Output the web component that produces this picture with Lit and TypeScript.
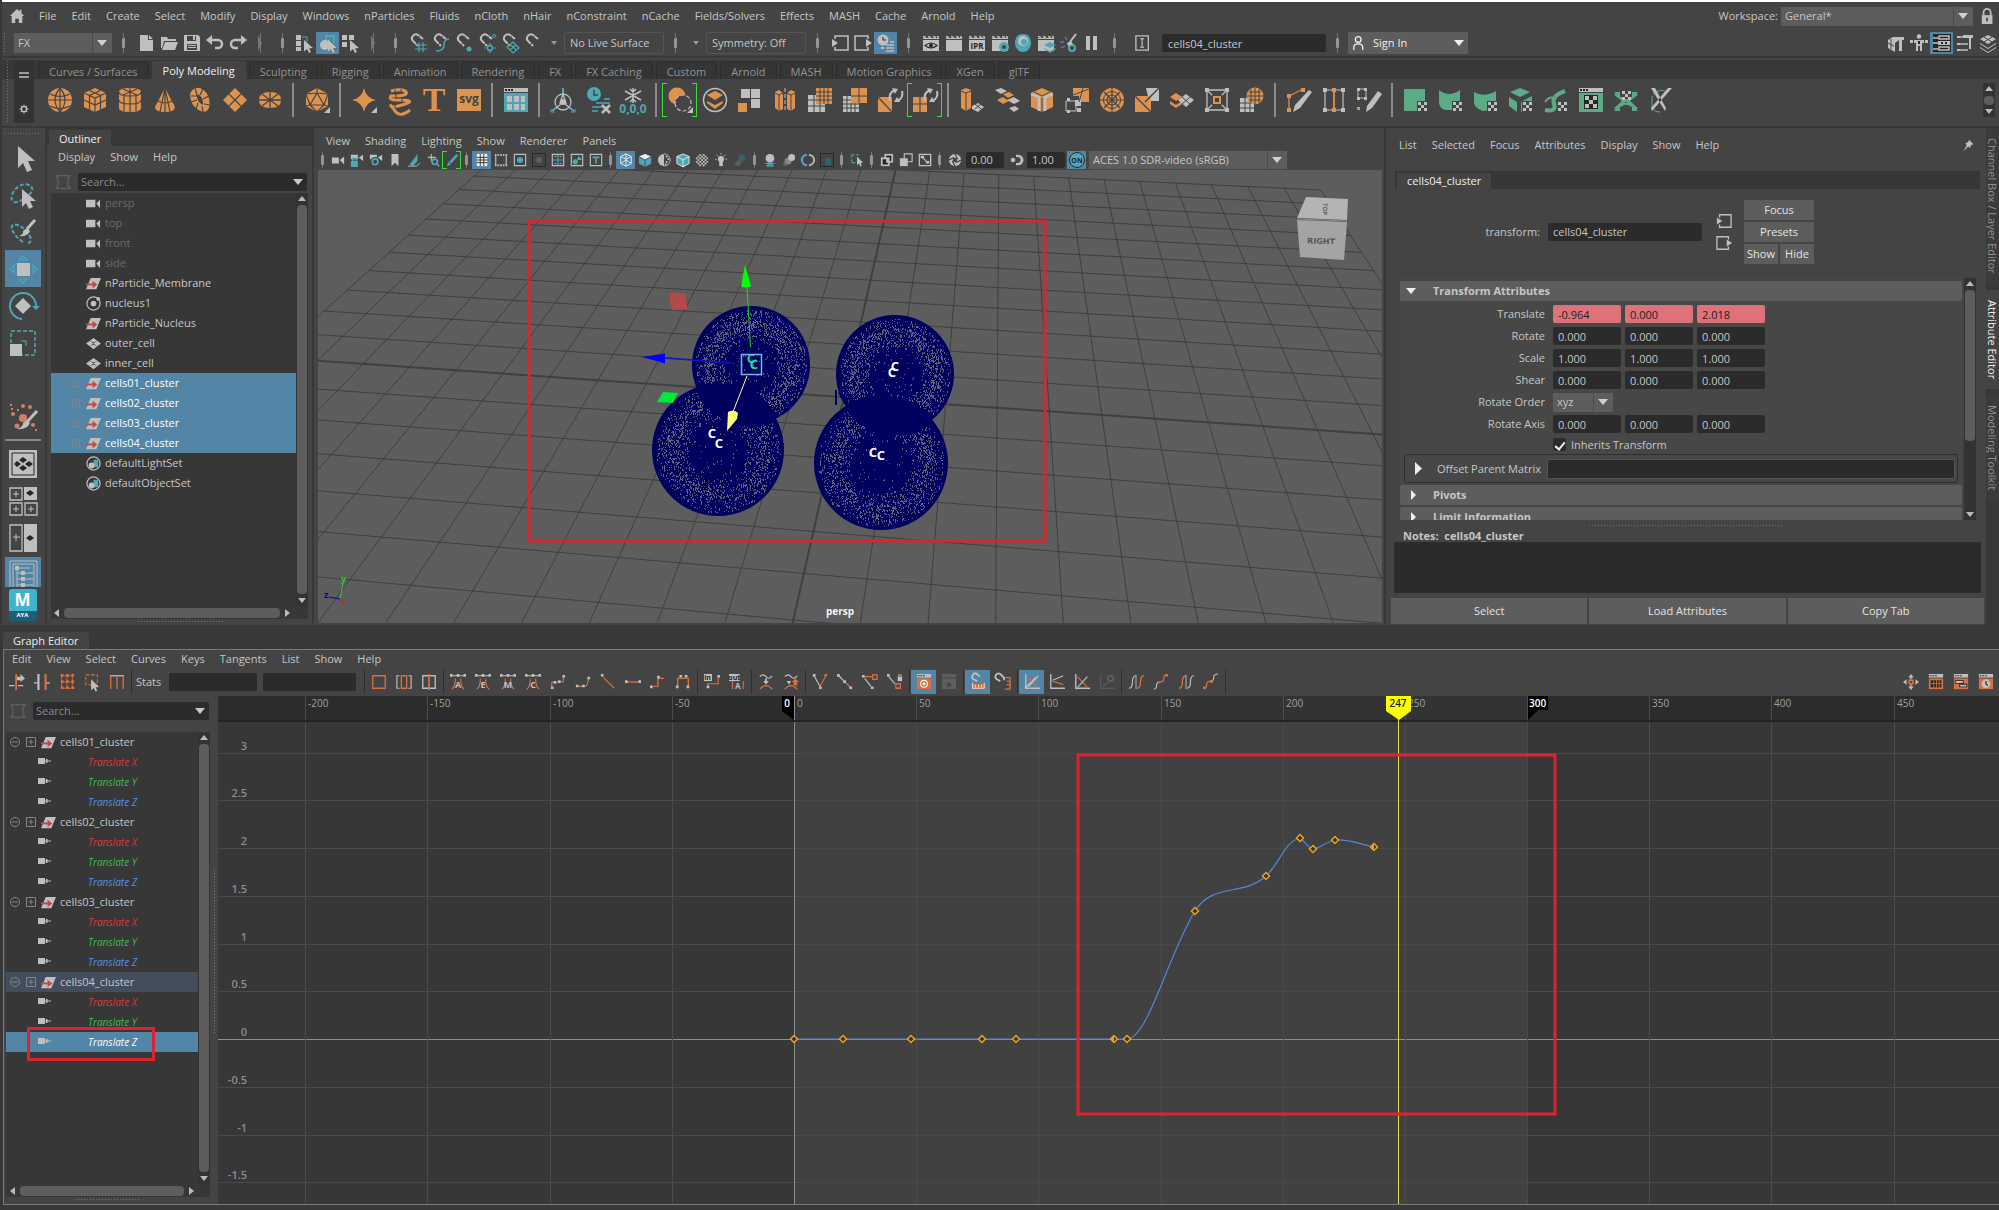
import { LitElement, html, svg, css } from "lit";
import { customElement } from "lit/decorators.js";
import { classMap } from "lit/directives/class-map.js";

/* ---------- Icon set ----------
   Each icon is a list of parts separated by "|".
   Part = colour letter (lower case fills, upper case strokes), optional stroke width, path data.
   A part that starts with "x" is a text: x colour size x y word family */
const COLORS: Record<string, string> = {
  g: "#bfbfbf", t: "#4fa6b5", o: "#dc9350", w: "#eeeeee", k: "#444444", n: "#5aab86", r: "#c04a48",
  a: "#d5703f", d: "#5e5e5e", b: "#262626", s: "#d07f6c", l: "#35e03a", m: "#35616b", e: "#858585",
};
const c = (x: number, y: number, r: number) => `M${x - r} ${y}a${r} ${r} 0 1 0 ${2 * r} 0a${r} ${r} 0 1 0 ${-2 * r} 0z`;
const clap = "g M1 6h16v11H1z|G1.5 M1 2.5l3 1M6 2.5l3 1M11 2.5l3 1M15 2.5l2 1|g M1 4h16v1H1z";
const magnet = "G2 M9 12L3.500 6.500A4 4 0 0 1 9 1l5 4|K1 M10.500 2l-2 3M6 11.500l2-3";
const checker = "k M13 13h11v11H13z|g M14 14h3v3h-3zM20 14h3v3h-3zM17 17h3v3h-3zM14 20h3v3h-3zM20 20h3v3h-3z";
const corner = "g M25 19v6h-6z";
const cursor = "g M8 6l9 8.500-4 .3 2 4-2 1-2-4-3 2.500z";
const win = "g M1 0h16v4H1z|b M2 1.500h2v1H2zM5 1.500h2v1H5zM8 1.500h2v1H8z|a M1 5h16v12H1z";
const bell = "A1.300 M2 17q4-2 4-12M16 17q-4-2-4-12|G1.200 M3 2h12|g M0 0h3v3H0zM7.500 0h3v3h-3zM15 0h3v3h-3z";
const sq = (x: number, y: number) => `M${x} ${y}h3v3h-3z`;
const sphereLines = "K1.200 M12 0v24M0 12h24M2 6q10 5 20 0M2 18q10 5 20 0M12 0q-10 12 0 24M12 0q10 12 0 24";

const ICONS: Record<string, string> = {
  home: "g M9 1L1 9h2v8h4v-5h4v5h4V9h2l-3-3V2h-2v2z",
  lock: "G2 M4 8V5a4 4 0 0 1 8 0v3|g M2 8h12v10H2z|k M7 11h2v4H7z",
  new: "g M3 1h8v5h5v11H3z|g M12 1l4 4h-4z",
  open: "g M1 3h6l1 2h8v2H4L2 14H1z|g M5 8h13l-3 8H2z",
  save: "g M1 1h14l2 2v14H1z|k M4 2h9v5H4zM4 10h10v6H4z|g M5 11h8v1H5zM5 13h8v1H5zM10 2h2v4h-2z",
  undo: "G2.500 M4 6h8a4 4 0 0 1 0 8H9|g M6 1v10L0 6z",
  redo: "G2.500 M14 6H6a4 4 0 0 0 0 8h3|g M12 1v10l6-5z",
  selH: "g M0 1h5v5H0zM0 7h5v5H0zM0 13h5v4H0z|T1 M6 3h5v5|g M8 6l9 8-4 .5 2 3.500-2 1-2-4-3 2.500z",
  selO: "T2 M7 8V2h8v7|g " + c(6, 11, 5) + "|K1 M9 5l9 9-4 .5 2 3.500|g M9 5l9 9-4 .5 2 3.500-2 1-2-4-3 2.500z",
  selC: "g M0 1h5v5H0zM7 1h5v5H7zM0 8h5v5H0z|g M8 6l9 8-4 .5 2 3.500-2 1-2-4-3 2.500z",
  snapGrid: magnet + "|T1.200 M6 11h12M6 15h12M10 8v10M14 8v10",
  snapCurve: magnet + "|T1.500 M4 17q8 0 8-6t5-6",
  snapPoint: magnet + "|t " + c(14, 15, 2.5),
  snapCenter: magnet + "|T1.500 " + c(12, 14, 2.5) + "|T1 " + c(16, 2, 1.5) + "|T1.200 M12 9v2M12 17v2M6 14h2M16 14h2",
  snapPlane: magnet + "|T1.200 M6 13l6-5 6 6-6 5zM9 10l6 6M9 16l6-5",
  snap: magnet,
  input: "G1.500 M4 5V2h13v14H4v-3|g M1 5l6 4-6 4z",
  output: "G1.500 M14 5V2H1v14h13v-3|g M12 5l6 4-6 4z",
  history: "g " + c(6, 6, 5.5) + "|B1 M6 3v3h3|G1.500 M9 11h8M9 14h8M9 17h8M13 8h4|g M4 13h3v2H4z",
  rView: clap + "|B1.200 M3 11.500q6-5 12 0-6 5-12 0z|b " + c(9, 11.5, 2),
  rFrame: clap,
  rIpr: clap + "|x b 8 9 15 IPR",
  rSet: clap + "|t " + c(13, 13, 5) + "|k " + c(13, 13, 2),
  rRing: "t M9 0C15 0 17 5 17 9s-3 9-8 9-8-5-8-9 2-9 8-9z|g " + c(9, 7, 5) + "|t " + c(10, 8, 3),
  rLayer: clap + "|t M13 8l6 3-6 3-6-3zM7 14l6 3 6-3v1l-6 4-6-4z",
  rLight: "T2 " + c(12, 14, 3) + "|G2 M16 0l-6 8|g M7 9l4-2 2 3-5 2z|T1 M0 8h4M1 14l4-2M5 3l2 3",
  pause: "g M3 2h4v14H3zM10 2h4v14h-4z",
  rename: "G1.500 M1 1h14v16H1z|G1.300 M6 4h1l1 1 1-1h1M8 5v8M6 14h1l1-1 1 1h1",
  user: "W1.500 " + c(7, 5, 3.2) + "|W1.500 M2 17v-3q0-4 5-4t5 4v3",
  tModel: "g M1 6l5-3h11v3h-2v11h-3V6l-4 3v9l-7-4z|K1 M1 9l6 3M4 5v10",
  tRig: "g " + c(9, 2.5, 2.3) + "|g M4 6h10v3h-2v8h-2v-5H8v5H6V9H4z|b M8 7h2v3H8z|g M0 6h3v3H0zM15 6h3v3h-3z",
  tAttr: "b M0 0h18v18H0z|G1.500 M6 2h10v3H6zM6 13h10v3H6z|G1.500 M0 4h5M0 9h5M0 15h5|g M5 7h12v4H5z|b M8 8h2v2H8zM12 8h2v2h-2z",
  tTool: "g M7 1h10v3h-2v11h-2V4H7zM1 2h3v2H1zM1 9h3v2H1zM1 15h3v2H1z|G1.300 M4 3h4M4 10h8M4 16h8",
  tLayer: "g M9 1l8 4-8 5-8-5zM1 9l8 5 8-5v1l-8 5-8-5zM1 13l8 5 8-5v1l-8 5-8-5z|K1 M5 3l8 5M13 3L5 8",
  lines: "G1.500 M1 4h10M1 8h10",
  gear: "G2 " + c(8, 8, 4) + "|G2 M8 1v3M8 12v3M1 8h3M12 8h3M3 3l2 2M11 11l2 2M13 3l-2 2M3 13l2-2",

  sphere: "o " + c(12, 12, 12) + "|" + sphereLines,
  cube: "o M12 0l11 5v14l-11 5-11-5V5z|K1.200 M1 5l11 5 11-5M12 10v14M6.500 2.500l11 5v14M17.500 2.500l-11 5v14M1 12l11 5 11-5",
  cylinder: "o M1 4q0-4 11-4t11 4v16q0 4-11 4T1 20z|K1.200 M1 4q0 4 11 4t11-4M1 12q0 4 11 4t11-4M12 0v24M6 7v16M18 7v16M5 1l14 6M19 1L5 7",
  cone: "o M12 0l10 19q0 5-10 5T2 19z|K1.200 M12 0v24M12 0L7 24M12 0l5 24M5 13q7 4 14 0",
  torus: "O6.500 M7 4C12 1 17 7 18 12S18 21 15 20.500 7 16 6 11 5 6 7 4z|K1.200 M3 8h6M7 0l2 7M15 1l-3 6M21 8l-6 3M22 17l-6-1M15 24l-1-6M8 21l2-6M3 14l6-2",
  plane: "o M12 0l12 12-12 12L0 12z|K1.300 M6 6l12 12M18 6L6 18",
  disc: "o M1 12q0-8 11-8t11 8-11 8T1 12z|K1.300 M1 12h22M12 4v16M4 6l16 12M20 6L4 18",
  platonic: "o M12 0l11 6v12l-11 6L1 18V6z|K1.200 M12 5l7 12H5zM12 0v5M1 6l11-1 11 1M1 18l4-1M23 18l-4-1M5 17l7 7 7-7M5 17L1 6M19 17l4-11|" + corner,
  star: "o M12 0q2 10 12 12-10 2-12 12-2-10-12-12 10-2 12-12z|" + corner,
  helix: "O3 M4 3q12-3 15 1T4 8q-3 4 6 4t12 1-7 4-11 1 4 5 15-1|K1 M8 1v5M14 1v5M9 6v5M15 9v6M8 14v6M14 19v6",
  type: "x o 34 12 23 T serif",
  svgIcon: "o M0 1h24v22H0z|x k 12 12 15 svg",
  grid: "g M0 0h24v4H0z|b M1 1h2v2H1zM4 1h2v2H4zM7 1h2v2H7z|t M0 5h24v19H0z|g M3 8h5v6H3zM10 8h5v6h-5zM17 8h4v6h-4zM3 16h5v6H3zM10 16h5v6h-5zM17 16h4v6h-4z",
  joint: "G1.300 " + c(12, 14, 8) + "|g " + c(12, 14, 3) + "|T2 M12 0v6M6 19l-5 4M18 19l5 4|G1.300 M12 6l-3 9h6zM10 16l-5 4M14 16l5 4|T1 M4 24H0v-3M20 24h4v-3",
  clockX: "t " + c(8, 6, 7) + "|K1.500 M8 2v5h4|T1.500 M10 15h14M6 19h10M6 23h6M18 11h6|G2.500 M16 17l8 8M24 17l-8 8",
  freeze: "G1.500 M12 0v15M4 3l16 9M20 3L4 12M9 1l3 3 3-3M9 14l3-3 3 3|x t 12 12 25 0,0,0",
  boolA: "o " + c(9, 8, 8.5) + "|k " + c(15, 15, 8) + "|G1.200d " + c(15, 15, 8) + "|o M7 8l6-4 4 3z|" + corner,
  layers: "G1.500 " + c(12, 12, 11.5) + "|o M12 3l8 4-8 5-8-5zM4 13l8 4 8-4v2l-8 6-8-6z",
  extract: "g M3 1h9v9H3zM13 1h9v9h-9zM13 11h9v9h-9z|o M0 15h9v9H0z",
  mirror: "o M2 4l4-2 4 3v16l-4 2-4-3zM22 4l-4-2-4 3v16l4 2 4-3z|K1 M2 5l4 2 4-2M6 7v16M22 5l-4 2-4-2M18 7v16|G1 M12 0v4M12 6v4M12 12v4M12 18v4",
  quadGrid: "g M0 7h17v17H0z|o M8 0h16v16H8z|K1 M12 0v24M16 0v16M20 0v16M8 4h16M8 8h16M0 12h24M0 18h17M6 7v17",
  quadGrid2: "g M0 8h16v16H0z|o M8 0h16v15H8z|K1 M16 0v15M8 8h16M4 8v16M8 15v9M12 15v9M0 12h8M0 16h16M0 20h16",
  retri: "o M0 9h14v15H0z|K1.200 M0 9l14 15|G2 M17 2q-7 3-5 11M19 13q7-3 5-10|g M14 0l6 1-3 5zM22 14l-6 0 3-5z",
  requad: "o M0 9h14v15H0z|K1.200 M0 16h14M7 9v15|G2 M17 2q-7 3-5 11M19 13q7-3 5-10|g M14 0l6 1-3 5zM22 14l-6 0 3-5z",
  extrude: "o M1 2l5-2 5 2v18l-5 3-5-3z|K1 M1 3l5 2 5-2M6 5v18|g M12 18l6-3 6 4-6 5-6-3z|K1 M15 16l6 5M21 16l-6 5",
  bridge: "g M0 2l6-2 6 3-6 3zM12 12l7-3 6 4-6 3zM14 20l6-2 4 3-5 3z|o M8 6l6-2 5 3-6 3zM2 12l6-3 6 4-6 3z",
  bevel: "o M12 0l11 5v14l-11 5-11-5V5z|G2.500 M1 6l8 3v14M23 6l-8 3v14|K1 M12 10v14M4 4l8 4 8-4",
  addDiv: "o M8 0h16v14H14V8H8z|G1 M1 13h10v10H1z|g M2 10h3v3H2zM10 12h6v6h-6zM2 22h3v3H2zM12 20h4v4h-4z|K1 M8 7l16-6M14 14l4-14",
  circular: "o " + c(12, 12, 12) + "|K1.200 " + c(12, 12, 5) + "|K1.200 M12 0v24M0 12h24M4 4l16 16M20 4L4 20|K1 " + c(12, 12, 8.5),
  collapse: "g M11 0h13v13H14z|o M0 8h16v16H0z|K1.300 M0 8l16 16|K1.500 M10 14L24 0",
  merge: "o M0 9l6-4 6 4-6 4zM0 13l6 4 6-4v3l-6 4-6-4z|g M8 12l8-6 8 6-8 7z|K1 M12 9l8 7M20 9l-8 7",
  smooth: "G1.300 M2 2h20v20H2zM2 2l20 20M22 2L2 22|g M0 0h4v4H0zM20 0h4v4h-4zM0 20h4v4H0zM20 20h4v4h-4z|k M7 7h10v10H7z|O2 M9 9h6v6H9z",
  sculpt: "g M0 10h14v14H0z|K1 M0 15h14M0 20h14M5 10v14M10 10v14|o " + c(15, 8, 8.5) + "|K1 M15 0v17M7 8h17M9 4h12M9 12h12M11 1v14M19 1v14",
  knife: "O1.200 M2 22V8L16 1|o M0 20h4v4H0zM0 6h4v4H0zM14 0h4v4h-4z|g M22 2l3 2-12 16-7 4 2-7z",
  edgeLoop: "G1.200 M3 2v20M21 2v20M3 2h18M3 22h18|O1.800 M12 2v20|g M1 0h4v4H1zM19 0h4v4h-4zM1 20h4v4H1zM19 20h4v4h-4z|o M10 0h4v4h-4zM10 20h4v4h-4z",
  pencil: "g M0 0h3v3H0zM7 0h3v3H7zM0 9h3v3H0zM7 9h3v3H7z|G1 M1 1h8v9H1z|o M0 19h3v3H0z|g M21 3l4 3-10 14-6 4 1-6z",
  uvPlane: "n M0 1h21v22H0z|" + checker,
  uvA: "n M0 2q10 8 21 0v20H6q-6-2-6-8z|" + checker,
  uvB: "n M0 4q10 6 22-1v13q-4 7-13 7-9-3-9-9z|" + checker,
  uvC: "n M1 4l10-4 10 4-10 5zM0 9l8 5v10l-8-6zM12 14l11-6v12l-11 4z|" + checker,
  uvD: "N4 M1 22q12 2 9-6t11-13|N2 M1 14q5-7 11-3|" + checker,
  uvE: "g M0 0h24v4H0z|b M1 1h2v2H1zM4 1h2v2H4zM7 1h2v2H7z|n M0 5h24v19H0z|b M5 7h14v14H5z|g M6 8h4v4H6zM14 8h4v4h-4zM10 12h4v4h-4zM6 16h4v4H6zM14 16h4v4h-4z",
  uvF: "N2.500 M1 6l9 7-9 8M23 6l-9 7 9 8M6 10q6 5 12 0M6 18q6-5 12 0|n M0 4h6v5zM24 4h-6v5zM0 23h6v-5zM24 23h-6v-5z|g M8 3h3v3H8zM14 3h3v3h-3zM11 6h3v3h-3zM8 9h3v3H8zM14 9h3v3h-3z",
  uvG: "N1 M4 6q8-6 14-2M3 8v12q4 5 8 4|g M2 0l4 0 11 20-1 3zM23 0h-4L2 20l1 3z",

  camera: "g M1 5h8v7H1zM10 8l5-4v9z",
  camLock: "g M1 2h8v5H1zM10 5l5-3v7z|t M1 9h8v7H1z|T1.500 M3 9V6h4v3",
  camGear: "g M1 2h8v5H1zM10 5l5-3v7z|k " + c(7, 10, 5.5) + "|T2 " + c(7, 10, 3.2),
  bookmark: "g M4 1h8v14l-4-4-4 4z",
  imgPlane: "t M3 13L12 1v8l-5 6z|G1 M1 15h10l4-4",
  panZoom: "G1.300 M6 1v8M2 5h9|T2 " + c(10, 10, 3) + "|T2 M12 12l3 3",
  brushT: "T3 M14 2L6 11|t M4 10l3 3-5 2z",
  gridB: "w M2 1h12v14H2z|B1 M2 5h12M2 8h12M2 11h12M6 1v14M10 1v14",
  film: "G1.300 M2 2h12v12H2z|g M1 1h14v2H1zM1 13h14v2H1z|b M3 1h1v2H3zM6 1h1v2H6zM9 1h1v2H9zM12 1h1v2h-1zM3 13h1v2H3zM6 13h1v2H6zM9 13h1v2H9zM12 13h1v2h-1z",
  gate: "G1.300 M1.500 1.500h13v13h-13z|t " + c(8, 8, 3.5),
  gateMask: "b M0 0h16v16H0z|k M1 1h14v14H1z|d " + c(8, 8, 3.5),
  field: "G1.300 M1.500 1.500h13v13h-13z|T1.300 M8 2v12M2 8h12|G1 M4 4h2M10 4h2M4 12h2M10 12h2",
  safeA: "G1.300 M1.500 1.500h13v13h-13z|t " + c(6, 10, 3) + "|t M10 3l4 5H8z",
  safeT: "G1.300 M1.500 1.500h13v13h-13z|t M4 4h8v2H9v6H7V6H4z",
  wire: "W1.100 M8 1l6 3v8l-6 3-6-3V4zM2 4l6 3 6-3M8 7v8M8 1v6M2 12l6-4 6 4",
  shade: "t M8 1l7 3v8l-7 4-7-4V4z|w M1 4l7-3 7 3-7 4z|K1 M1 4l7 4 7-4M8 8v8",
  half: "g M8 1a7 7 0 0 0 0 14z|G1 M8 1a7 7 0 0 1 0 14|g M10 3h2v2h-2zM12 6h2v2h-2zM10 9h2v2h-2zM9 12h2v2H9z",
  texCube: "t M8 1l7 3v8l-7 4-7-4V4z|W1 M8 1l7 3v8l-7 4-7-4V4zM1 4l7 4 7-4M8 8v8",
  check: "g M5 1h2v2H5zM9 1h2v2H9zM3 3h2v2H3zM7 3h2v2H7zM11 3h2v2h-2zM1 5h2v2H1zM5 5h2v2H5zM9 5h2v2H9zM13 5h2v2h-2zM3 7h2v2H3zM7 7h2v2H7zM11 7h2v2h-2zM1 9h2v2H1zM5 9h2v2H5zM9 9h2v2H9zM13 9h2v2h-2zM3 11h2v2H3zM7 11h2v2H7zM11 11h2v2h-2zM5 13h2v2H5zM9 13h2v2H9z",
  bulb: "g " + c(8, 7, 3.5) + "|g M6 10h4v5H6z|G1 M8 0v2M1 7h2M13 7h2M3 2l2 2M13 2l-2 2",
  shadow: "m " + c(10, 6, 4) + "|d M1 13l6-6 3 5-4 3z",
  ao: "g " + c(8, 6, 5) + "|T1.300 M2 12h12M4 15h8M4 9l8 6M12 9l-8 6",
  blur: "d " + c(4, 12, 3) + "|e " + c(7, 9, 4) + "|g " + c(11, 5, 4),
  multi: "T2.500 M7 2a6 6 0 0 0 0 12|G2 M9 2a6 6 0 0 1 0 12",
  depth: "b M0 0h16v16H0z|k M1 1h14v14H1z|m M6 6h7v8H6z",
  isolate: "T1.300 M2 2h3M7 2h3M2 2v3M2 7v3M2 11h4|g M8 4l7 7-3 .5 1.500 3-1.500 1-2-3.500-2 2z",
  xrayA: "g M5 1h10v10H5z|b M7 3h6v6H7z|g M1 5h10v10H1z|b M3 7h4v6H3zM7 11h2v2H7z",
  xrayB: "G1.300 M6 1h9v9H6z|g M1 6h9v9H1z",
  xrayC: "G1.500 M1.500 1.500h13v13h-13z|G1.500 M5 5l6 6|g M3 3h4v3H3zM9 9h4v3H9z",
  aperture: "g " + c(8, 8, 7) + "|k " + c(8, 8, 2.5) + "|K1.300 M8 1l3 6M15 8l-6 3M8 15l-3-6M1 8l6-3",
  gamma: "g M8 1h3a7 7 0 0 1 0 14H8v-3h2a4 4 0 0 0 0-8H8z|g " + c(4, 8, 3),
  on: "t " + c(8, 8, 8) + "|B1 " + c(8, 8, 7.5) + "|x b 7 8 11 ON",

  arrow: "g M9 2v22l5-5 4 9 5-2-4-9h7z",
  lasso: "T2d M14 18C6 24 1 21 3 14S14 1 20 4s3 7-1 11|g M13 8v18l4-4 3 6 4-2-3-6h6z",
  paint: "T2d M14 24C8 20 1 12 3 8s10 0 15 6 5 10 1 11|G3 M26 2L18 11|g M18 10l3 3q-2 6-11 5 5-2 4-5z",
  move: "g M8 8h13v13H8z|T1.200 M10 5h8l-4-4zM10 24h8l-4 4zM5 10v8l-4-4zM24 10v8l4-4z",
  rotate: "T2 M13 27A13 13 0 1 1 27 14|t M23 14h8l-4 4z|g M14 6l8 8-8 8-8-8z",
  scale: "T1.500d M2 2h24v24H2z|T1.200 M12 12h5v5|g M1 15h12v12H1z",
  spray: "s " + c(14, 15, 4) + "|s " + c(14, 3, 2) + "|s " + c(21, 4, 2) + "|s " + c(4, 11, 2) + "|s " + c(8, 23, 2.5) + "|s " + c(24, 22, 2) + "|s M1 1h2v2H1zM8 6h2v2H8zM2 5h2v2H2zM26 26h2v2h-2z|G3 M28 8L18 19|g M18 17l3 3q-3 7-13 6 6-2 6-6z",
  pane1: "g M0 0h28v28H0z|B1 M3 3h22v22H3z|b M14 7l4 3-4 3-4-3zM14 15l4 3-4 3-4-3zM8 11l4 3-4 3-3-3zM20 11l4 3-4 3-4-3z",
  pane4: "G1.300 M1 1h12v12H1zM1 16h12v12H1zM16 16h12v12H16z|g M15 0h13v13H15z|G1 M7 4v6M4 7h6M7 19v6M4 22h6M22 19v6M19 22h6|b M21 3l4 3-4 3-4-3z",
  pane2: "G1.300 M1 1h12v26H1z|g M15 0h13v28H15z|G1 M7 10v7M4 13h7|b M21 11l4 3-4 3-4-3z",
  paneTree: "G1 M1 30V1h27v29M4 30V4h21v26|g M6 6h4v4H6zM12 11h4v4h-4zM12 17h4v4h-4zM12 23h4v4h-4z|G1 M10 8h11M8 10v17M16 13h8M8 13h4M16 19h8M8 19h4M16 25h8M8 25h4",
  swap: "D1.300 M3 12V4M13 4v8M5 1.500h6M5 14.500h6|d M0 1h5l-3 4zM11 1h5l-2 4zM0 15h5l-3-4zM11 15h5l-2-4z",

  cam: "g M0 4h10v8H0zM11 8l4-4v9z",
  xform: "g M5 2h11l-5 12H0z|R2 M0 9h8|r M7 5l5 4-5 4z",
  nuc: "G1.300 " + c(8, 8, 7) + "|g " + c(8, 8, 3) + "|g " + c(13, 3, 2),
  mesh: "g M8 2l4 3-4 2-4-2zM8 9l4 2-4 3-4-3zM4 5l4 3-4 3-4-3zM12 5l4 3-4 3-4-3z",
  objset: "G1.300 " + c(8, 8, 7) + "|t M8 4h5v8H8z|g " + c(6, 10, 3.2),
  plus: "E1 M1.500 1.500h9v9h-9zM3.500 6h5M6 3.500v5",
  minus: "E1 " + c(6, 6, 4.5) + "|E1 M3 6h6",
  plug: "g M1 3h7v6H1zM8 5.500h6v1H8zM9 4h1.500v4H9z",
  pin: "g M8 1l6 6-3 1-2 4-2-2-6 6 4-8-2-2 4-2z",

  g1: "A2 M8 0v18|G1.500 M0 13h6M10 13h6|g M9 3h4V0l5 5-5 4V7H9z",
  g2: "G2.500 M5 0v18|A2.500 M13 0v18|G1.500 M0 10h4M14 10h4",
  g3: "A1 M3 2h12v14H3zM9 2v14M3 9h12|a M2 0h3v3H2zM8 0h3v3H8zM14 0h3v3h-3zM2 7h3v3H2zM8 7h3v3H8zM14 7h3v3h-3zM2 14h3v3H2zM8 14h3v3H8zM14 14h3v3h-3z",
  g4: "A1.200d M2 1h13v11H2z|" + cursor,
  g5: "G1.500 M1 2h16|A1.500 M2 2v15M9 2v15M16 2v15",
  g6: "A1.500 M2 2h14v14H2z",
  g7: "A1.500 M6 2h6v14H6z|G1.300 M4 2H1v14h3M14 2h3v14h-3",
  g8: "G1.500 M2 2h14v14H2z|A2 M9 0v18",
  tA: bell + "|x g 10 9 16 A", tE: bell + "|x g 10 9 16 E", tM: bell + "|x g 10 9 16 M", tC: bell + "|x g 10 9 16 C",
  c1: "A1.300 M2 14V9h13V4|g " + sq(1, 14) + sq(4, 8) + sq(9, 7) + sq(14, 1),
  c2: "A1.300 M3 14h8q4-1 4-10|g " + sq(1, 12) + sq(8, 12) + sq(14, 3),
  c3: "A1.300 M4 4l12 12|g " + sq(1, 0),
  c4: "A1.500 M3 9h12|g " + sq(0, 7) + sq(15, 7),
  c5: "A1.500 M3 14h6V5h7|g " + sq(0, 13) + sq(8, 2),
  c6: "A1.500 M3 14V5h12v9|g " + sq(1, 13) + sq(13, 13) + sq(5, 1) + sq(11, 1),
  tIn: "g M0 0h9v8H0z|x b 8 4 7 in|A1.300 M4 16v-5h12V4|g " + sq(3, 13) + sq(15, 1),
  tOut: "g M0 0h12v8H0z|x b 8 6 7 out|A1.300 M4 17V8M16 17V8|x g 9 10 17 A",
  b1: "G1.300 M2 3q4-4 7 0t7-1|G2 M9 5v4|g M6 8h6l-3 4z|A1.500 M2 17q7-8 14 0",
  b2: "G1.300 M2 3q4-4 7 0t7-1|g M4 8h5l-2 4z|a M10 9l4-4 4 4h-2v4h-4V9z|A1.500 M2 17q7-8 14 0",
  k1: "G1.300 M3 3l6 11|A1.300 M9 14l6-11|g " + sq(1, 0) + sq(8, 14) + "|a " + sq(14, 0),
  k2: "G1.300 M2 2l5 5|A1.300 M7 7l9 9|g " + sq(0, 0) + sq(7, 7) + sq(14, 14),
  k3: "A1.500 M3 3h9M12 1h5v5h-5z|G1.300 M3 5l7 9|g " + sq(0, 1) + sq(10, 14),
  k4: "G1.300 M2 3l7 8|A1.500 M10 11h5v5h-5z|g " + sq(0, 0) + "|g M12 3h5v5h-5z|G1 M13 3V1h3v2",
  w1: win + "|w " + c(9, 11, 4.5) + "|A1.500 " + c(9, 11, 2.5),
  w2: "d M1 0h16v4H1zM1 5h16v12H1z|k " + c(9, 12, 2.5),
  m1: "G2 M8 8L4 6A3.500 3.500 0 0 1 8 0l3 3|a M2 11h15v6H2z|W1 M3 10v6h13v-6M6 12v3M9.500 12v3M13 12v3",
  m2: "G2 M6 8L2 6A3 3 0 0 1 6 0l4 4v3|A1.500 M11 4h6v13h-6M13 8h4M13 12h4",
  v1: "G1.500 M2 0v16h16M1 16l12-12|A1.500 M4 4l10 9|G1.500 M5 14L16 2",
  v2: "G1.500 M2 0v16h16|G1.300 M4 7l12-5|A1.300 M4 8l12 4",
  v3: "G1.500 M2 0v16h16|A1.300 M4 3l11 12|G1.300 M4 15L15 3",
  v4: "D1.300 M2 0v16h16M4 14l8-6|D2 " + c(13, 5, 3),
  f1: "G1.300 M1 16q4 0 4-7t4-7|G1 M9 1v16|A1.500 M10 16q4 0 4-7t4-7",
  f2: "G1.300 M1 17q3 0 3-4t4-4|A1.500 M8 9q4 0 4-4t4-4|a " + sq(14, 0),
  f3: "A1.500 M1 16q4 0 4-7t4-7|G1 M9 1v16|G1.300 M10 16q4 0 4-7t4-7",
  f4: "A1.500 M1 16q3 0 3-4t5-4|G1.300 M9 8q3 0 3-4t5-4|a " + sq(0, 14) + sq(8, 7),
  r1: "g M9 0l3 4H6zM9 18l3-4H6zM0 9l4-3v6zM18 9l-4-3v6z|a M6 6h6v6H6z|k M8 8h2v2H8z|G1.500 M9 3v3M9 12v3",
  r2: win + "|b M3 7h12v8H3z|a M6 7h1v8H6zM9 7h1v8H9zM12 7h1v8h-1zM3 10h12v1H3z",
  r3: win + "|b M2 7h10v4H2zM7 11h9v4H7z|g M3 8h8v2H3zM8 12h7v2H8z",
  r4: win + "|g " + c(9, 11, 5) + "|B1.300 M9 8v3l2 2",
};

function icon(name: string, size: number, box = size) {
  const parts = (ICONS[name] ?? "").split("|").map((part) => {
    if (part.startsWith("x ")) {
      const [, col, fs, x, y, word, fam] = part.split(" ");
      return svg`<text x=${x} y=${y} fill=${COLORS[col]} font-size=${fs} font-weight="700" text-anchor="middle"
        font-family=${fam ? "Liberation Serif, serif" : "Open Sans, sans-serif"}>${word}</text>`;
    }
    const at = part.indexOf(" ");
    const head = part.slice(0, at);
    const d = part.slice(at + 1);
    const key = head[0];
    if (key === key.toLowerCase()) return svg`<path d=${d} fill=${COLORS[key]}/>`;
    return svg`<path d=${d} fill="none" stroke=${COLORS[key.toLowerCase()]} stroke-width=${parseFloat(head.slice(1)) || 1}
      stroke-dasharray=${head.endsWith("d") ? "4 2" : "none"}/>`;
  });
  return html`<svg class="ico" width=${size} height=${size} viewBox="0 0 ${box} ${box}" aria-hidden="true">${parts}</svg>`;
}

const RED = "#da2430";

/* ---------- Perspective viewport ---------- */
type Pt = [number, number];

/** Solves the plane-to-screen projection from four known grid corners. */
function projection(src: Pt[], dst: Pt[]) {
  const m: number[][] = [];
  src.forEach(([u, v], i) => {
    const [x, y] = dst[i];
    m.push([u, v, 1, 0, 0, 0, -u * x, -v * x, x]);
    m.push([0, 0, 0, u, v, 1, -u * y, -v * y, y]);
  });
  for (let i = 0; i < 8; i++) {
    let p = i;
    for (let r = i; r < 8; r++) if (Math.abs(m[r][i]) > Math.abs(m[p][i])) p = r;
    [m[i], m[p]] = [m[p], m[i]];
    for (let r = 0; r < 8; r++) {
      if (r === i) continue;
      const f = m[r][i] / m[i][i];
      for (let k = i; k < 9; k++) m[r][k] -= f * m[i][k];
    }
  }
  const h = m.map((row, i) => row[8] / row[i]);
  return (u: number, v: number): Pt => {
    const w = h[6] * u + h[7] * v + 1;
    return [(h[0] * u + h[1] * v + h[2]) / w, (h[3] * u + h[4] * v + h[5]) / w];
  };
}
const project = projection(
  [[-12, -10], [12, -12], [8, 5], [-12, -2]],
  [[156, 6], [1003, 20], [1014, 449], [6, 141]],
);

const BALLS = [
  { x: 433, y: 195, r: 59 },
  { x: 577, y: 204, r: 59 },
  { x: 400, y: 280, r: 66 },
  { x: 563, y: 293, r: 67 },
];

function speckles() {
  let seed = 7;
  const rnd = () => ((seed = (seed * 16807) % 2147483647) / 2147483647);
  let d = "";
  for (const b of BALLS) {
    for (let i = 0; i < 3600; i++) {
      const a = rnd() * Math.PI * 2;
      const q = Math.sqrt(rnd());
      const keep = q > 0.94 ? 0 : q > 0.8 ? 0.5 : q < 0.45 ? 0.06 : q < 0.6 ? 0.5 : 1;
      if (rnd() > keep) continue;
      const x = Math.round(b.x + Math.cos(a) * q * b.r);
      const y = Math.round(b.y + Math.sin(a) * q * b.r);
      if (BALLS.some((o) => o !== b && Math.hypot(x - o.x, y - o.y) < o.r + 2)) continue;
      d += `M${x} ${y}h1v${rnd() < 0.3 ? 2 : 1}h-1z`;
    }
  }
  return d;
}

@customElement("scene-view")
class SceneView extends LitElement {
  static styles = css`
    :host { display: block; min-height: 0; background: #5d5d5d; overflow: hidden; }
    .canvas { display: block; width: 100%; height: 100%; font-family: "Open Sans", "Noto Sans", sans-serif; }
  `;

  render() {
    const lines = [];
    for (let i = -12; i <= 12; i++) {
      const ends: [Pt, Pt][] = [[project(i, -12), project(i, 9)], [project(-12, i), project(12, i)]];
      ends.forEach(([a, b], k) => {
        if (k === 1 && i > 9) return;
        lines.push(svg`<line x1=${a[0]} y1=${a[1]} x2=${b[0]} y2=${b[1]} stroke="#3f3f3f" stroke-width=${i === 0 ? 2 : 1}/>`);
      });
    }
    const marks: [number, number, string][] = [
      [577, 201, "#fff"], [574, 207, "#fff"], [394, 268, "#fff"], [401, 278, "#fff"],
      [555, 287, "#fff"], [563, 290, "#fff"], [433, 193, "#16d98a"], [436, 199, "#16e89a"],
    ];
    return html`<svg class="canvas" role="img" aria-label="Perspective view">
      ${lines}
      ${BALLS.map((b) => svg`<circle cx=${b.x} cy=${b.y} r=${b.r} fill="#00005e"/>`)}
      <path d=${speckles()} fill="#5a6078"/>
      <path d="M518 220v15M521 222l4 8" stroke="#00005e" stroke-width="2"/>
      <g font-size="13" font-weight="700" text-anchor="middle">
        ${marks.map(([x, y, f]) => svg`<text x=${x} y=${y} fill=${f}>C</text>`)}
      </g>
      <path d="M429 117l3.500 60" stroke="#22d322"/>
      <path d="M427 95l6 21q-5 3-10 0z" fill="#00ff00"/>
      <path d="M347 188l66 5" stroke="#1414c8" stroke-width="1.500"/>
      <path d="M324 187l23-3.500v10z" fill="#0000ff"/>
      <path d="M429 206l-14 36" stroke="#ffff9a"/>
      <path d="M410 242q6-3 10 1l-1 6-10 12z" fill="#ffff78"/>
      <rect x="423.500" y="184.500" width="20" height="20" fill="none" stroke="#6fb8e8" stroke-width="1.500"/>
      <path d="M352 123l15 1 2 15-14 1q-3-3-3-17z" fill="#b14a48" stroke="#c24240"/>
      <path d="M345 222l15 1-5 10-16-1z" fill="#00e93c"/>
      <path d="M988 27l42 2-1 21-50-2z" fill="#b4b4b4"/>
      <path d="M979 50l50 2-3 38-44-3z" fill="#a4a4a4"/>
      <path d="M979 49l50 2" stroke="#8a8a8a"/>
      <text x="1003" y="74" font-size="8" font-weight="700" fill="#565656" text-anchor="middle" font-family="DejaVu Sans, sans-serif" transform="rotate(2 1003 74)">RIGHT</text>
      <text x="1007" y="41" font-size="6" font-weight="700" fill="#606060" text-anchor="middle" transform="rotate(92 1007 39)">TOP</text>
      <path d="M22 429l3-16" stroke="#35c435"/><path d="M22 429l-11-2" stroke="#0000c8"/><path d="M22 429l4 5" stroke="#c81e1e" stroke-width="2"/>
      <text x="23" y="412" font-size="9" font-weight="700" fill="#30c430">y</text>
      <text x="6" y="428" font-size="9" font-weight="700" fill="#0000c8">z</text>
      <text x="522" y="445" font-size="10" font-weight="700" fill="#f4f4f4" text-anchor="middle">persp</text>
      <rect x="211" y="51" width="516" height="320" fill="none" stroke=${RED} stroke-width="3"/>
    </svg>`;
  }
}

/* ---------- Animation curve canvas ---------- */
const ZERO_X = 576;
const PER_FRAME = 2.4436;
const ZERO_Y = 343;
const PER_UNIT = 95.5;
const KEYS: [number, number, boolean?][] = [
  [576, 343], [625, 343], [693, 343], [764, 343], [798, 343], [896, 343, true], [909, 343],
  [977, 215], [1048, 180], [1082, 142], [1095, 153], [1117, 144], [1156, 151, true],
];

@customElement("curve-view")
class CurveView extends LitElement {
  static styles = css`
    :host { display: block; min-width: 0; min-height: 0; background: #373737; overflow: hidden; }
    .canvas { display: block; width: 100%; height: 100%; font-family: "Open Sans", "Noto Sans", sans-serif; }
  `;

  render() {
    const frames = Array.from({ length: 14 }, (_, i) => -200 + i * 50);
    const values = Array.from({ length: 10 }, (_, i) => 3 - i * 0.5);
    const fx = (f: number) => Math.round(ZERO_X + f * PER_FRAME);
    const vy = (v: number) => Math.round(ZERO_Y - v * PER_UNIT);
    const endX = fx(300);
    return html`<svg class="canvas" role="img" aria-label="Animation curves">
      <rect width="100%" height="24" fill="#2c2c2c"/>
      <rect x=${ZERO_X} width=${endX - ZERO_X} height="24" fill="#333333"/>
      <rect x=${ZERO_X} y="26" width=${endX - ZERO_X} height="100%" fill="#414141"/>
      ${values.map((v) => svg`
        <rect x="0" y=${vy(v)} width="100%" height="1" fill=${v === 0 ? "#8f8f8f" : "#494949"}/>
        <text x="29" y=${vy(v) - 3} font-size="11" font-weight="600" fill="#8c8c8c" text-anchor="end">${v}</text>`)}
      ${frames.map((f) => svg`
        <rect x=${fx(f)} y="0" width="1" height="100%" fill=${f === 0 ? "#8f8f8f" : "#4c4c4c"}/>
        ${f === 300 ? "" : svg`<text x=${fx(f) + 3} y="11" font-size="10" fill="#a0a0a0">${f}</text>`}`)}
      <rect y="24" width="100%" height="2" fill="#232323"/>
      <path d="M576 343H896M896 343h13C930 343 950 259 977 215C995 186 1025 201 1048 180C1063 166 1066 146 1082 142C1087 145 1090 153 1095 153C1102 152 1108 146 1117 144C1130 143 1142 148 1156 151"
        fill="none" stroke="#5288d8" stroke-width="1.200"/>
      ${KEYS.map(([x, y, half]) => svg`
        <path d="M${x} ${y - 3.5}l3.500 3.500-3.500 3.500-3.500-3.500z" fill="#333" stroke="#f0a215" stroke-width="1.500"/>
        ${half ? svg`<path d="M${x} ${y - 3.5}v7l-3.500-3.500z" fill="#f0a215"/>` : ""}`)}
      <path d="M564 0h12v24l-12-9z" fill="#000"/>
      <text x="569" y="11" font-size="10" font-weight="600" fill="#fff" text-anchor="middle">0</text>
      <path d="M${endX + 1} 0h20v14h-10l-10 10z" fill="#000"/>
      <text x=${endX + 2} y="11" font-size="10" font-weight="600" fill="#fff">300</text>
      <rect x="1180" y="20" width="1" height="100%" fill="#dede3a"/>
      <path d="M1168 0h25v15l-12 9-13-9z" fill="#ffff00"/>
      <text x="1180" y="11" font-size="10" font-weight="600" fill="#222" text-anchor="middle">247</text>
      <rect x="860" y="59" width="477" height="359" fill="none" stroke=${RED} stroke-width="3"/>
    </svg>`;
  }
}

/* ---------- Application shell ---------- */
const MAIN_MENU = ["File", "Edit", "Create", "Select", "Modify", "Display", "Windows", "nParticles", "Fluids", "nCloth", "nHair", "nConstraint", "nCache", "Fields/Solvers", "Effects", "MASH", "Cache", "Arnold", "Help"];
const SHELF_TABS = ["Curves / Surfaces", "Poly Modeling", "Sculpting", "Rigging", "Animation", "Rendering", "FX", "FX Caching", "Custom", "Arnold", "MASH", "Motion Graphics", "XGen", "glTF"];
const SHELF = "sphere cube cylinder cone torus plane disc - platonic - star helix type svgIcon - grid - joint clockX freeze - [boolA layers extract mirror quadGrid quadGrid2 retri [requad - extrude bridge bevel addDiv circular collapse merge smooth sculpt - knife edgeLoop pencil - uvPlane uvA uvB uvC uvD uvE uvF uvG".split(" ");
const VIEW_TOOLS = "- camera camLock camGear bookmark imgPlane panZoom [brushT - *gridB film gate gateMask field safeA safeT - *wire shade half texCube check bulb shadow - ao blur multi depth - isolate - xrayA xrayB xrayC -".split(" ");
const GRAPH_A = "g1 g2 g3 g4 g5 -".split(" ");
const GRAPH_B = "- g6 g7 g8 - tA tE tM tC c1 c2 c3 c4 c5 c6 - tIn tOut - b1 b2 - k1 k2 k3 k4 - *w1 w2 - *m1 m2 - *v1 v2 v3 v4 - f1 f2 f3 f4 -".split(" ");
const NODES: [string, string, string?][] = [
  ["cam", "persp", "dim"], ["cam", "top", "dim"], ["cam", "front", "dim"], ["cam", "side", "dim"],
  ["xform", "nParticle_Membrane"], ["nuc", "nucleus1"], ["xform", "nParticle_Nucleus"], ["mesh", "outer_cell"], ["mesh", "inner_cell"],
  ["xform", "cells01_cluster", "on"], ["xform", "cells02_cluster", "on"], ["xform", "cells03_cluster", "on"], ["xform", "cells04_cluster", "on"],
  ["objset", "defaultLightSet"], ["objset", "defaultObjectSet"],
];
const ATTRS: [string, string[], boolean][] = [
  ["Translate", ["-0.964", "0.000", "2.018"], true],
  ["Rotate", ["0.000", "0.000", "0.000"], false],
  ["Scale", ["1.000", "1.000", "1.000"], false],
  ["Shear", ["0.000", "0.000", "0.000"], false],
];

@customElement("app-root")
class AppRoot extends LitElement {
  static styles = css`
    :host {
      display: grid; box-sizing: border-box; height: 100vh; overflow: hidden;
      grid-template-rows: 30px 28px 70px minmax(0, 497fr) minmax(0, 585fr);
      background: #383838; color: #c6c6c6;
      font: 11px/16px "Open Sans", "Noto Sans", sans-serif;
      border-left: 2px solid #383838;
    }
    * { box-sizing: border-box; }
    button, input, select, textarea { font: inherit; color: inherit; border: 0; margin: 0; padding: 0; background: none; border-radius: 0; min-width: 0; }
    button { cursor: default; white-space: nowrap; }
    input, textarea { background: #2b2b2b; border-radius: 2px; outline: none; }
    ul { list-style: none; margin: 0; padding: 0; }
    .ico { display: block; overflow: visible; flex: none; }
    .row { display: flex; align-items: center; }
    .grow { flex: 1; min-width: 0; }

    .menu { display: flex; align-items: center; gap: 15px; height: 22px; white-space: nowrap; flex: none; }
    .select { position: relative; display: flex; background: #5d5d5d; height: 18px; flex: none; }
    .select select { appearance: none; width: 100%; padding: 0 24px 0 4px; outline: none; }
    .select::after { content: ""; position: absolute; right: 5px; top: 50%; margin-top: -3px; border: 5px solid transparent; border-top: 6px solid #d0d0d0; border-bottom: 0; pointer-events: none; }
    .select::before { content: ""; position: absolute; right: 19px; top: 0; bottom: 0; width: 1px; background: #4a4a4a; }
    .dots { background-image: radial-gradient(circle, #757575 1px, transparent 1px); background-size: 3px 3px; }

    .menubar { border-top: 2px solid #fff; background: #444; padding: 0 0 0 7px; }
    .menubar .menu { margin-left: 14px; }
    .workspace { display: flex; align-items: center; gap: 3px; }
    .workspace .select { width: 192px; height: 19px; }

    .status { background: #444; border-bottom: 2px solid #383838; }
    .grip { width: 4px; height: 22px; margin: 0 7px 0 1px; }
    .status .mode { width: 98px; height: 20px; }
    .sb { display: grid; place-items: center; width: 23px; height: 22px; flex: none; }
    .sb.lead { margin-left: 6px; }
    .sel { background: #5285a6; }
    .sep { width: 22px; height: 20px; flex: none; display: grid; place-items: center; }
    .sep::before { content: ""; grid-area: 1 / 1; width: 1px; height: 20px; background: #777; }
    .sep::after { content: ""; grid-area: 1 / 1; width: 3px; height: 10px; background: #949494; border-radius: 1px; }
    .sep.end::after { width: 4px; height: 16px; clip-path: polygon(0 0, 100% 50%, 0 100%); background: #777; }
    .tri { width: 20px; display: grid; place-items: center; flex: none; }
    .tri::before { content: ""; border: 3px solid transparent; border-top: 4px solid #999; border-bottom: 0; }
    .boxed { width: 100px; height: 22px; border: 1px solid #555; text-align: left; padding: 0 5px; border-radius: 2px; flex: none; }
    .nodename { width: 164px; height: 18px; padding: 0 6px; margin-left: 8px; }
    .signin { width: 120px; height: 22px; background: #5d5d5d; color: #eee; display: flex; align-items: center; gap: 5px; padding: 0 4px; flex: none; }
    .signin::after { content: ""; margin-left: auto; border: 5px solid transparent; border-top: 6px solid #eee; border-bottom: 0; }

    .shelf { display: grid; grid-template-columns: 4px 20px minmax(0, 1fr); column-gap: 4px; border-top: 2px solid #444; border-bottom: 2px solid #383838; padding-left: 4px; background: linear-gradient(#383838 19px, #444 19px); }
    .shelfgrip { height: 62px; }
    .shelfstrip { background: #333; height: 63px; display: flex; flex-direction: column; align-items: center; padding: 9px 0; justify-content: space-between; }
    .tabs { display: flex; gap: 3px; height: 19px; align-items: flex-end; }
    .tabs button { height: 17px; padding: 0 10px; color: #929292; background: #353535; border: 1px solid #2c2c2c; border-bottom: 0; border-radius: 2px 2px 0 0; line-height: 15px; }
    .tabs .cur { height: 18px; background: #444; color: #eee; border-color: #444; }
    .shelfrow { display: flex; align-items: center; height: 42px; padding-left: 4px; }
    .sh { display: grid; place-items: center; width: 35px; height: 34px; flex: none; position: relative; }
    .ssep { width: 2px; height: 34px; background: #8c8c8c; margin: 0 5px; flex: none; }
    .brk { position: relative; }
    .brk::before, .brk::after { content: ""; position: absolute; top: 0; bottom: 0; width: 4px; border: 1px solid #35e03a; }
    .brk::before { left: 0; border-right: 0; }
    .brk::after { right: 0; border-left: 0; }
    .shelfscroll { margin-left: auto; margin-right: 4px; width: 12px; height: 34px; background: #333; display: flex; flex-direction: column; align-items: center; justify-content: space-between; padding: 3px 0; }
    .up, .down { border: 4px solid transparent; border-bottom: 5px solid #bbb; border-top: 0; }
    .down { border-top: 5px solid #bbb; border-bottom: 0; }
    .left, .right { border: 4px solid transparent; border-right: 5px solid #bbb; border-left: 0; }
    .right { border-left: 5px solid #bbb; border-right: 0; }
    .knob { width: 10px; height: 9px; border-radius: 4px; background: #5d5d5d; }

    .main { display: grid; grid-template-columns: 43px 265px minmax(0, 1fr) 613px; grid-template-rows: minmax(0, 1fr); gap: 2px; min-height: 0; }
    .toolbox { background: #444; display: flex; flex-direction: column; align-items: center; padding: 4px 2px 0 0; min-height: 0; overflow: hidden; }
    .toolbox .dots { width: 37px; height: 4px; margin-bottom: 3px; flex: none; }
    .tb { display: grid; place-items: center; width: 36px; height: 37px; flex: none; }
    .tb.gap { margin-top: 37px; }
    .tline { width: 36px; height: 2px; background: #8a8a8a; margin: 4px 0; flex: none; }
    .tb.cut { height: 30px; place-items: start center; overflow: hidden; padding-top: 3px; margin-top: 1px; }
    .logo { width: 28px; height: 32px; margin: 2px 0 0; border-radius: 3px; background: linear-gradient(#3fb3d0 22px, #1d5d78 22px); color: #fff; font-weight: 700; display: flex; flex-direction: column; align-items: center; flex: none; }
    .logo .m { font-size: 17px; line-height: 22px; }
    .logo .n { font-size: 6px; line-height: 9px; }

    .panel { background: #444; display: flex; flex-direction: column; min-width: 0; min-height: 0; }
    .striptab { background: #383838; height: 18px; padding: 2px 0 0 2px; flex: none; }
    .striptab button { background: #444; height: 17px; color: #eee; padding: 0 10px; border-radius: 2px 2px 0 0; }
    .outliner { padding-bottom: 2px; }
    .outliner .menu { padding-left: 11px; }
    .searchrow { display: flex; align-items: center; gap: 7px; padding: 5px 5px 2px 8px; flex: none; }
    .searchbox { position: relative; flex: 1; display: flex; height: 18px; }
    .searchbox input { width: 100%; padding: 0 3px; }
    .searchbox input::placeholder { color: #8a8a8a; opacity: 1; }
    .searchbox::after { content: ""; position: absolute; right: 4px; top: 6px; border: 5px solid transparent; border-top: 6px solid #c8c8c8; border-bottom: 0; }
    .listwrap { flex: 1; min-height: 0; display: grid; grid-template-columns: minmax(0, 1fr) 12px; grid-template-rows: minmax(0, 1fr); background: #373737; margin: 0 4px; }
    .list { overflow: hidden; }
    .list li { display: flex; align-items: center; height: 20px; padding-left: 20px; gap: 4px; }
    .list .box { width: 11px; }
    .list .dim { color: #6c6c6c; }
    .list .on { background: #5285a6; color: #fff; }
    .vbar { display: flex; flex-direction: column; align-items: center; gap: 4px; padding: 3px 0; background: #333; }
    .thumb { background: #5d5d5d; border-radius: 4px; }
    .vbar .thumb { width: 10px; flex: 1; }
    .hbar { display: flex; align-items: center; gap: 5px; height: 13px; margin: 0 4px; padding: 0 18px 0 3px; background: #373737; flex: none; }
    .hbar .thumb { height: 10px; flex: 1; }
    .hdots { height: 3px; width: 86px; margin: 1px auto 0; flex: none; }

    .viewport { padding: 0 2px 2px 4px; }
    .viewport .menu { padding: 4px 0 0 8px; }
    .viewbar { display: flex; align-items: center; height: 20px; flex: none; margin-left: -1px; }
    .vb { display: grid; place-items: center; width: 19px; height: 18px; flex: none; }
    .viewbar .sep { width: 11px; height: 16px; }
    .viewbar .sep::before { height: 16px; }
    .num { width: 38px; height: 16px; padding: 0 5px; margin: 0 2px; flex: none; }
    .viewbar .select { width: 198px; margin-left: 3px; }
    scene-view { flex: 1; }

    .attrs { display: grid; grid-template-columns: minmax(0, 1fr) 13px; grid-template-rows: minmax(0, 1fr); min-height: 0; }
    .attrs .menu { padding-left: 13px; height: 34px; }
    .attrs .panel { padding-bottom: 1px; }
    .attrs .vb { margin-right: 8px; }
    .nodetabs { margin: 9px 6px 0 9px; background: #373737; height: 18px; padding: 2px 0 0 2px; flex: none; }
    .nodetabs button { background: #444; height: 16px; padding: 0 10px; color: #eee; display: block; }
    .nodehead { display: flex; align-items: center; height: 87px; padding-left: 78px; flex: none; padding-bottom: 2px; }
    .nodehead label { width: 76px; text-align: right; margin-right: 8px; }
    .nodehead input { width: 154px; height: 18px; padding: 0 5px; }
    .io { display: grid; gap: 6px; margin: 0 12px 0 14px; }
    .btns { display: grid; grid-template-columns: 34px 34px; gap: 2px; }
    .btns .wide { grid-column: span 2; }
    .btn { background: #5d5d5d; color: #e4e4e4; height: 20px; text-align: center; }
    .scroll { flex: 1; min-height: 0; display: grid; grid-template-columns: minmax(0, 1fr) 12px; grid-template-rows: minmax(0, 1fr); margin: 2px 10px 0 14px; gap: 2px; overflow: hidden; }
    .sections { overflow: hidden; min-height: 0; padding-top: 3px; background: #474747; }
    .head { display: flex; align-items: center; gap: 16px; width: 100%; height: 20px; background: #5d5d5d; font-weight: 700; padding-left: 11px; border-radius: 2px; margin-bottom: 2px; }
    .head .mark { width: 5px; height: 10px; background: #eee; clip-path: polygon(0 0, 100% 50%, 0 100%); margin-right: 1px; }
    .head.open .mark { width: 10px; height: 6px; clip-path: polygon(0 0, 100% 0, 50% 100%); margin: 0 1px 0 -5px; }
    .arow { display: grid; grid-template-columns: 145px repeat(3, 68px); column-gap: 4px; align-items: center; height: 22px; }
    .arow > :first-child { text-align: right; }
    .arow > :nth-child(2) { margin-left: 4px; width: 68px; }
    .arow.nums { grid-template-columns: 149px repeat(3, 68px); }
    .arow.nums > :first-child { padding-right: 4px; }
    .arow.nums > :nth-child(2) { margin-left: 0; }
    .arow input { height: 18px; padding: 0 5px; }
    .arow .keyed { background: #dd727a; color: #222; }
    .arow > .select { width: 60px; height: 19px; }
    .tick { display: flex; align-items: center; gap: 5px; height: 19px; padding-left: 153px; }
    .tick input { appearance: none; width: 13px; height: 13px; background: #2b2b2b; display: grid; place-items: center; }
    .tick input:checked::before { content: ""; width: 4px; height: 8px; border: solid #eee; border-width: 0 2px 2px 0; transform: rotate(40deg); }
    .matrix { display: flex; align-items: center; height: 29px; margin: 0 4px 2px; border: 1px solid #2f2f2f; border-radius: 3px; padding: 0 2px 0 10px; }
    .matrix .mark { width: 7px; height: 13px; background: #eee; clip-path: polygon(0 0, 100% 50%, 0 100%); }
    .matrix label { width: 119px; text-align: right; margin-right: 6px; }
    .matrix input { flex: 1; height: 20px; border: 1px solid #555; }
    .scroll .vbar .thumb { flex: none; height: 64%; margin-bottom: auto; }
    .ndots { width: 196px; height: 3px; margin: 4px auto 3px; flex: none; }
    .notes { font-weight: 700; padding-left: 17px; line-height: 12px; flex: none; }
    .attrs textarea { display: block; height: 51px; margin: 0 5px 5px 8px; resize: none; flex: none; border-radius: 0; }
    .footer { display: grid; grid-template-columns: 1fr 1fr 1fr; gap: 2px; padding: 0 2px 0 5px; flex: none; }
    .footer .btn { height: 26px; }
    .side { background: #383838; display: flex; flex-direction: column; gap: 6px; overflow: hidden; }
    .side button { writing-mode: vertical-rl; padding: 10px 0; color: #8f8f8f; line-height: 13px; background: #3b3b3b; text-align: left; }
    .side .cur { background: #444; color: #eee; }

    .graph { display: grid; grid-template-rows: 24px minmax(0, 1fr); padding: 0 0 5px 1px; min-height: 0; }
    .graph > .striptab { height: 24px; padding: 7px 0 0; }
    .frame { border: 1px solid #7a7a7a; border-right: 0; background: #444; display: grid; grid-template-rows: 18px 28px minmax(0, 1fr); min-height: 0; }
    .frame .menu { height: 18px; padding-left: 8px; }
    .gbar { display: flex; align-items: center; min-width: 0; }
    .gb { display: grid; place-items: center; width: 25px; height: 24px; flex: none; }
    .gsep { width: 1px; height: 24px; background: #2e2e2e; margin: 0 1px 0 2px; flex: none; }
    .gbar label { width: 33px; margin-left: 3px; flex: none; }
    .gbar .stat { width: 88px; height: 18px; margin-right: 6px; flex: none; }
    .gbar .stat.wide { width: 93px; }
    .gbar .tail { margin-left: auto; display: flex; padding-right: 1px; }
    .gb.tight { width: 24px; }
    .body { display: grid; grid-template-columns: 214px minmax(0, 1fr); grid-template-rows: minmax(0, 1fr); min-height: 0; }
    .chan { display: flex; flex-direction: column; min-height: 0; padding-right: 8px; position: relative; }
    .chan .searchrow { padding: 6px 1px 12px 6px; }
    .chan .listwrap, .chan .hbar { margin: 0 0 0 2px; }
    .chan .list li { padding-left: 3px; gap: 4px; }
    .chan .list li.ch { padding-left: 31px; font-style: italic; font-size: 10px; gap: 37px; }
    .chan .x { color: #dc3a3a; }
    .chan .y { color: #3fbe46; }
    .chan .z { color: #5590ee; }
    .chan .list .cur { background: #434e5c; }
    .chan .list .pick { background: #5285a6; color: #fff; position: relative; }
    .chan .hbar { padding: 0 16px 0 4px; }
    .chan .hdots { width: 66px; margin-bottom: 3px; }
    .vdots { position: absolute; right: 2px; top: 34%; width: 3px; height: 166px; }
    .note { position: absolute; left: 21px; top: -5px; width: 128px; height: 34px; border: 3px solid #da2430; pointer-events: none; }
  `;

  private menu(items: string[]) {
    return html`<nav class="menu">${items.map((m) => html`<button>${m}</button>`)}</nav>`;
  }

  private tools(items: string[], cls: string, size: number, box: number, sep: string) {
    return items.map((raw) => {
      if (raw === "-") return html`<span class=${sep}></span>`;
      const name = raw.replace(/^[[*]/, "");
      return html`<button class=${classMap({ [cls]: true, sel: raw[0] === "*", brk: raw[0] === "[" })} aria-label=${name}>${icon(name, size, box)}</button>`;
    });
  }

  private renderStatus() {
    const t = (s: string) => this.tools(s.split(" "), "sb", 18, 18, "sep");
    const end = html`<span class="sep end"></span>`;
    return html`<div class="row status">
      <span class="grip dots"></span>
      <div class="select mode"><select aria-label="Menu set"><option>FX</option></select></div>
      ${t("- new open save undo redo")}${end}${t("- selH *selO selC")}${end}
      ${t("- snapGrid snapCurve snapPoint snapCenter snapPlane snap")}
      <span class="tri"></span><button class="boxed">No Live Surface</button>
      ${t("-")}<span class="tri"></span><button class="boxed">Symmetry: Off</button>
      ${t("- input output *history - rView rFrame rIpr rSet rRing rLayer rLight pause -")}
      <button class="sb lead" aria-label="Rename">${icon("rename", 16, 18)}</button>
      <input class="nodename" aria-label="Node name" value="cells04_cluster" />
      ${t("-")}
      <button class="signin">${icon("user", 16, 18)}Sign In</button>
      <span class="grow"></span>
      ${t("tModel tRig *tAttr tTool tLayer")}
    </div>`;
  }

  private renderShelf() {
    return html`<div class="shelf">
      <span class="dots shelfgrip"></span>
      <div class="shelfstrip">
        <button aria-label="Shelf menu">${icon("lines", 12)}</button>
        <button aria-label="Shelf options">${icon("gear", 10, 16)}</button>
      </div>
      <div class="grow">
        <div class="tabs">${SHELF_TABS.map((s) => html`<button class=${classMap({ cur: s === "Poly Modeling" })}>${s}</button>`)}</div>
        <div class="shelfrow">${this.tools(SHELF, "sh", 24, 24, "ssep")}
          <div class="shelfscroll"><span class="up"></span><span class="knob"></span><span class="down"></span></div>
        </div>
      </div>
    </div>`;
  }

  private renderToolbox() {
    return html`<aside class="toolbox">
      <span class="dots"></span>
      ${this.tools("arrow lasso paint *move rotate scale".split(" "), "tb", 28, 28, "")}
      <button class="tb gap" aria-label="Spray">${icon("spray", 28)}</button>
      <span class="tline"></span>
      ${this.tools(["pane1", "pane4", "pane2"], "tb", 28, 28, "")}
      <button class="tb cut sel" aria-label="Outliner layout">${icon("paneTree", 28)}</button>
      <div class="logo"><span class="m">M</span><span class="n">AYA</span></div>
    </aside>`;
  }

  private search() {
    return html`<div class="searchrow">${icon("swap", 16)}
      <div class="searchbox"><input type="text" aria-label="Search" placeholder="Search..." /></div></div>`;
  }

  private renderOutliner() {
    return html`<section class="panel outliner">
      <div class="striptab"><button>Outliner</button></div>
      ${this.menu(["Display", "Show", "Help"])}
      ${this.search()}
      <div class="listwrap">
        <ul class="list">${NODES.map(([ic, name, st]) => html`<li class=${st ?? ""}>
          <span class="box">${st === "on" ? icon("plus", 10, 12) : ""}</span>${icon(ic, 15, 16)}<span>${name}</span></li>`)}</ul>
        <div class="vbar"><span class="up"></span><span class="thumb"></span><span class="down"></span></div>
      </div>
      <div class="hbar"><span class="left"></span><span class="thumb"></span><span class="right"></span></div>
      <span class="dots hdots"></span>
    </section>`;
  }

  private renderViewport() {
    return html`<section class="panel viewport">
      ${this.menu(["View", "Shading", "Lighting", "Show", "Renderer", "Panels"])}
      <div class="viewbar">
        ${this.tools(VIEW_TOOLS, "vb", 14, 16, "sep")}
        <button class="vb" aria-label="Exposure">${icon("aperture", 14, 16)}</button>
        <input class="num" aria-label="Exposure value" value="0.00" />
        <button class="vb" aria-label="Gamma">${icon("gamma", 12, 16)}</button>
        <input class="num" aria-label="Gamma value" value="1.00" />
        <button class="vb sel" aria-label="Color management">${icon("on", 16)}</button>
        <div class="select"><select aria-label="View transform"><option>ACES 1.0 SDR-video (sRGB)</option></select></div>
      </div>
      <scene-view></scene-view>
    </section>`;
  }

  private numRow(label: string, vals: string[], keyed: boolean) {
    return html`<div class="arow nums"><span>${label}</span>
      ${vals.map((v, i) => html`<input class=${keyed ? "keyed" : ""} aria-label="${label} ${"XYZ"[i]}" value=${v} />`)}</div>`;
  }

  private renderAttrs() {
    return html`<div class="attrs">
      <section class="panel">
        <div class="row"><div class="grow">${this.menu(["List", "Selected", "Focus", "Attributes", "Display", "Show", "Help"])}</div>
          <button class="vb" aria-label="Pin">${icon("pin", 12, 16)}</button></div>
        <div class="nodetabs"><button>cells04_cluster</button></div>
        <div class="nodehead">
          <label for="node">transform:</label><input id="node" value="cells04_cluster" />
          <div class="io">${icon("input", 16, 18)}${icon("output", 16, 18)}</div>
          <div class="btns"><button class="btn wide">Focus</button><button class="btn wide">Presets</button><button class="btn">Show</button><button class="btn">Hide</button></div>
        </div>
        <div class="scroll">
          <div class="sections">
            <button class="head open"><span class="mark"></span>Transform Attributes</button>
            ${ATTRS.map((a) => this.numRow(...a))}
            <div class="arow"><label for="order">Rotate Order</label>
              <div class="select"><select id="order"><option>xyz</option></select></div></div>
            ${this.numRow("Rotate Axis", ["0.000", "0.000", "0.000"], false)}
            <label class="tick"><input type="checkbox" checked />Inherits Transform</label>
            <div class="matrix"><span class="mark"></span><label for="matrix">Offset Parent Matrix</label><input id="matrix" /></div>
            <button class="head"><span class="mark"></span>Pivots</button>
            <button class="head"><span class="mark"></span>Limit Information</button>
          </div>
          <div class="vbar"><span class="up"></span><span class="thumb"></span><span class="down"></span></div>
        </div>
        <span class="dots ndots"></span>
        <label class="notes" for="notes">Notes:&nbsp; cells04_cluster</label>
        <textarea id="notes"></textarea>
        <div class="footer"><button class="btn">Select</button><button class="btn">Load Attributes</button><button class="btn">Copy Tab</button></div>
      </section>
      <div class="side"><button>Channel Box / Layer Editor</button><button class="cur">Attribute Editor</button><button>Modeling Toolkit</button></div>
    </div>`;
  }

  private renderGraph() {
    const nodes = ["cells01_cluster", "cells02_cluster", "cells03_cluster", "cells04_cluster"];
    return html`<section class="graph">
      <div class="striptab"><button>Graph Editor</button></div>
      <div class="frame">
        ${this.menu(["Edit", "View", "Select", "Curves", "Keys", "Tangents", "List", "Show", "Help"])}
        <div class="gbar">
          ${this.tools(GRAPH_A, "gb", 16, 18, "gsep")}
          <label for="stat">Stats</label>
          <input id="stat" class="stat" /><input class="stat wide" aria-label="Stat value" />
          ${this.tools(GRAPH_B, "gb", 16, 18, "gsep")}
          <div class="tail">${this.tools(["r1", "r2", "r3", "r4"], "gb", 16, 18, "")}</div>
        </div>
        <div class="body">
          <div class="chan">
            ${this.search()}
            <div class="listwrap">
              <ul class="list">${nodes.map((n, i) => html`
                <li class=${i === 3 ? "cur" : ""}>${icon("minus", 12)}${icon("plus", 12)}${icon("xform", 15, 16)}<span>${n}</span></li>
                ${["X", "Y", "Z"].map((a) => {
                  const pick = i === 3 && a === "Z";
                  return html`<li class="ch ${pick ? "pick" : a.toLowerCase()}">${icon("plug", 14)}<span>Translate ${a}</span>${pick ? html`<span class="note"></span>` : ""}</li>`;
                })}`)}</ul>
              <div class="vbar"><span class="up"></span><span class="thumb"></span><span class="down"></span></div>
            </div>
            <div class="hbar"><span class="left"></span><span class="thumb"></span><span class="right"></span></div>
            <span class="dots hdots"></span>
            <span class="dots vdots"></span>
          </div>
          <curve-view></curve-view>
        </div>
      </div>
    </section>`;
  }

  render() {
    return html`
      <header class="row menubar">
        ${icon("home", 16, 18)}${this.menu(MAIN_MENU)}<span class="grow"></span>
        <div class="workspace"><label for="ws">Workspace:</label>
          <div class="select"><select id="ws"><option>General*</option></select></div>
          <button class="sb" aria-label="Lock workspace">${icon("lock", 16, 18)}</button></div>
      </header>
      ${this.renderStatus()}
      ${this.renderShelf()}
      <main class="main">${this.renderToolbox()}${this.renderOutliner()}${this.renderViewport()}${this.renderAttrs()}</main>
      ${this.renderGraph()}
    `;
  }
}
